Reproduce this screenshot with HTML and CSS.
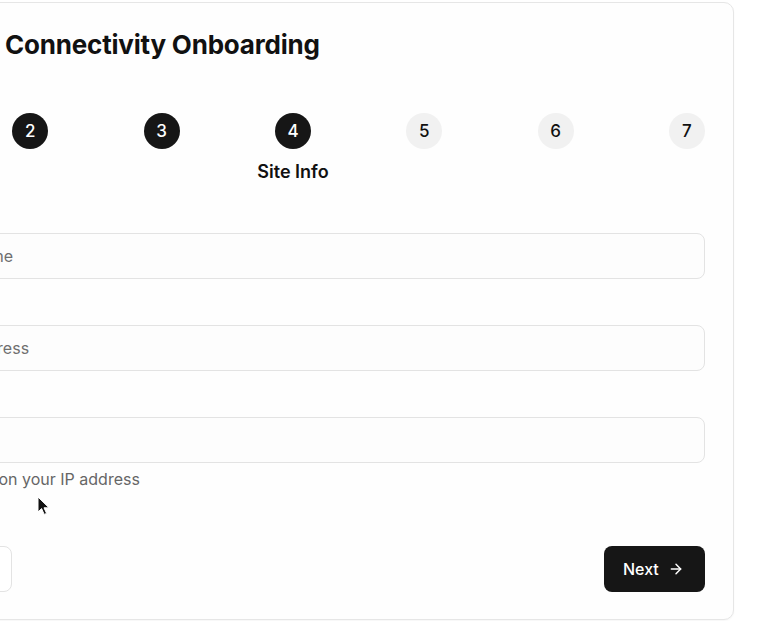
FILE: index.html
```html
<!DOCTYPE html>
<html lang="en">
<head>
<meta charset="utf-8">
<title>Connectivity Onboarding</title>
<link rel="stylesheet" href="styles.css">
</head>
<body>
<main class="card">
  <h1 class="title">Connectivity Onboarding</h1>
  <ol class="steps">
    <li class="step done"><span class="dot">1</span></li>
    <li class="step done"><span class="dot">2</span></li>
    <li class="step done"><span class="dot">3</span></li>
    <li class="step active"><span class="dot">4</span><span class="step-label">Site Info</span></li>
    <li class="step"><span class="dot">5</span></li>
    <li class="step"><span class="dot">6</span></li>
    <li class="step"><span class="dot">7</span></li>
  </ol>
  <form class="form">
    <div class="field">
      <label class="label" for="site">Site</label>
      <input class="input" id="site" type="text" placeholder="Enter site name">
    </div>
    <div class="field">
      <label class="label" for="addr">Addr</label>
      <input class="input" id="addr" type="text" placeholder="Enter the address">
    </div>
    <div class="field">
      <label class="label" for="loc">Loc</label>
      <input class="input" id="loc" type="text">
      <p class="help">Prefilled based on your IP address</p>
    </div>
    <div class="actions">
      <button type="button" class="btn btn-back">Back</button>
      <button type="button" class="btn btn-next">Next
        <svg class="arrow" width="16" height="16" viewBox="0 0 24 24" fill="none" stroke="currentColor" stroke-width="2.2" stroke-linecap="round" stroke-linejoin="round"><path d="M5 12h14"/><path d="M12 5l7 7-7 7"/></svg>
      </button>
    </div>
  </form>
</main>
<svg class="cursor" width="14" height="20" viewBox="0 0 14 20"><path d="M1 1 L1 16 L4.6 12.6 L7.2 18.4 L9.6 17.4 L7 11.8 L12 11.8 Z" fill="#111" stroke="#fff" stroke-width="1"/></svg>
</body>
</html>
```
FILE: styles.css
```css
* { box-sizing: border-box; }
html, body { margin: 0; background: #fff; overflow: hidden; }
body {
  font-family: Inter, "Noto Sans", sans-serif;
  color: #111;
  width: 768px;
  height: 621px;
  position: relative;
}
.card {
  margin: 2px 0 0 -148px;
  width: 882px;
  height: 618px;
  border: 1px solid #e6e6e6;
  border-radius: 10px;
  background: #fefefe;
  padding: 25px 28px 26px 28px;
  display: flex;
  flex-direction: column;
  box-shadow: 0 1px 2px rgba(0,0,0,0.04);
}
.title {
  margin: 0;
  padding-left: 124px;
  font-size: 26px;
  line-height: 34px;
  font-weight: 700;
  letter-spacing: -0.2px;
}
.steps {
  list-style: none;
  margin: 51px 0 0;
  padding: 0;
  display: flex;
  justify-content: space-between;
  height: 70px;
}
.step {
  width: 36px;
  display: flex;
  flex-direction: column;
  align-items: center;
}
.dot {
  width: 36px;
  height: 36px;
  border-radius: 50%;
  display: flex;
  align-items: center;
  justify-content: center;
  font-size: 17px;
  font-weight: 500;
  background: #f1f1f1;
  color: #111;
}
.step.done .dot, .step.active .dot {
  background: #161616;
  color: #fff;
}
.step-label {
  margin-top: 12px;
  white-space: nowrap;
  font-size: 18px;
  line-height: 22px;
  font-weight: 600;
}
.form {
  margin-top: 22px;
  display: flex;
  flex-direction: column;
  gap: 18px;
}
.field {
  display: flex;
  flex-direction: column;
  gap: 8px;
}
.label {
  font-size: 14px;
  line-height: 20px;
  font-weight: 500;
}
.input {
  height: 46px;
  border: 1px solid #e3e3e3;
  border-radius: 8px;
  background: #fdfdfd;
  padding: 0 14px;
  font-family: inherit;
  font-size: 16px;
  color: #111;
}
.input::placeholder { color: #6f6f6f; }
.help {
  margin: -2px 0 0;
  font-size: 16px;
  line-height: 20px;
  color: #666;
}
.actions {
  margin-top: 39px;
  display: flex;
  justify-content: space-between;
}
.btn {
  height: 46px;
  border-radius: 8px;
  font-family: inherit;
  font-size: 16px;
  font-weight: 500;
  display: flex;
  align-items: center;
  cursor: pointer;
}
.btn-back {
  width: 131px;
  background: #fff;
  border: 1px solid #e3e3e3;
  color: #111;
  padding: 0 18px;
}
.btn-next {
  width: 101px;
  background: #161616;
  border: 0;
  color: #fff;
  padding: 0 0 0 19px;
  gap: 9px;
}
.arrow { flex: none; }
.cursor {
  position: absolute;
  left: 37px;
  top: 496px;
}
```
